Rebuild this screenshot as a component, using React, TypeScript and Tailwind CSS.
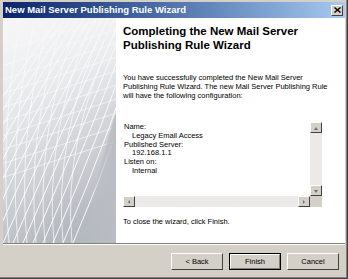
import React from 'react'

const font = { fontFamily: '"Liberation Sans", Arial, sans-serif' }

const ArrowBtn = ({ dir }: { dir: 'up' | 'down' | 'left' | 'right' }) => {
    const pts = {
        up: '2,6 6,6 4,3',
        down: '2,3 6,3 4,6',
        left: '5,2 5,6 3,4',
        right: '3,2 3,6 5,4',
    }[dir]
    return (
        <div className="w-[12px] h-[11px] shrink-0 bg-[#d4d0c8] border-t border-l border-t-white border-l-white border-b border-r border-b-[#404040] border-r-[#404040] flex items-center justify-center">
            <svg width="8" height="8" viewBox="0 0 8 8"><polygon points={pts} fill="#707070" /></svg>
        </div>
    )
}

const SideArt = () => {
    const a: React.ReactElement[] = []
    for (let i = 0; i < 16; i++) {
        const x0 = -80 + i * 10
        a.push(<path key={'a' + i} d={`M${x0} 225 Q ${x0 + 50} 110 ${60 + i * 6} -5`} stroke="white" strokeWidth="1" fill="none" opacity="0.9" />)
    }
    for (let i = 0; i < 12; i++) {
        const x0 = -30 + i * 9
        a.push(<path key={'b' + i} d={`M${x0} 225 Q ${x0 - 10} 120 ${-40 + i * 14} 10`} stroke="white" strokeWidth="1" fill="none" opacity="0.7" />)
    }
    for (let i = 0; i < 10; i++) {
        const y = 5 + i * 14
        a.push(<path key={'c' + i} d={`M-5 ${y + 30} L 120 ${y - 10}`} stroke="white" strokeWidth="1" fill="none" opacity="0.6" />)
    }
    return (
        <svg width="113" height="225" viewBox="0 0 113 225" className="block">
            <defs>
                <linearGradient id="bg" x1="0" y1="0" x2="0.4" y2="1">
                    <stop offset="0" stopColor="#f6f6f7" />
                    <stop offset="0.45" stopColor="#dfe1e4" />
                    <stop offset="1" stopColor="#b4b8bf" />
                </linearGradient>
                <linearGradient id="fade" x1="0" y1="0" x2="0" y2="1">
                    <stop offset="0" stopColor="#f6f6f7" stopOpacity="0.75" />
                    <stop offset="0.4" stopColor="#f6f6f7" stopOpacity="0.2" />
                    <stop offset="1" stopColor="#f6f6f7" stopOpacity="0" />
                </linearGradient>
                <linearGradient id="corner" x1="0" y1="0" x2="1" y2="0">
                    <stop offset="0" stopColor="#b9bdc3" stopOpacity="0" />
                    <stop offset="1" stopColor="#b9bdc3" stopOpacity="1" />
                </linearGradient>
            </defs>
            <rect width="113" height="225" fill="url(#bg)" />
            {a}
            <rect width="113" height="225" fill="url(#fade)" />
            <path d="M80 225 Q 95 150 113 95 L113 225 Z" fill="url(#corner)" />
        </svg>
    )
}

const App = () => {
    return (
        <div className="w-[348px] h-[279px] bg-[#d4d0c8] text-black overflow-hidden" style={font}>
            <div className="w-full h-full border-r border-b border-[#404040]">
                <div className="w-full h-full border-r border-b border-[#808080] pt-[2px] pl-[3px] pr-[1px] flex flex-col">

                    <div className="h-[16px] shrink-0 flex items-center justify-between pl-[2px] pr-[2px] bg-gradient-to-r from-[#0a246a] to-[#a6caf0]">
                        <span className="text-white font-bold text-[9.5px] leading-none">New Mail Server Publishing Rule Wizard</span>
                        <div className="w-[12px] h-[11px] bg-[#d4d0c8] border-t border-l border-t-white border-l-white border-b border-r border-b-[#404040] border-r-[#404040] flex items-center justify-center">
                            <svg width="7" height="6" viewBox="0 0 7 6"><path d="M0.5 0.5 L6.5 5.5 M6.5 0.5 L0.5 5.5" stroke="black" strokeWidth="1.4" /></svg>
                        </div>
                    </div>

                    <div className="h-[225px] shrink-0 flex">
                        <div className="w-[113px] shrink-0">
                            <SideArt />
                        </div>
                        <div className="flex-1 bg-white pl-[7px] pt-[6px]">
                            <h1 className="text-[11.5px] font-bold leading-[14px]">Completing the New Mail Server<br />Publishing Rule Wizard</h1>

                            <p className="mt-[21px] text-[7.5px] leading-[9px] whitespace-nowrap">
                                You have successfully completed the New Mail Server<br />
                                Publishing Rule Wizard. The new Mail Server Publishing Rule<br />
                                will have the following configuration:
                            </p>

                            <div className="mt-[22px] w-[199px] h-[85px] flex flex-col">
                                <div className="flex h-[74px]">
                                    <div className="flex-1 pl-[1px] pt-[1px] text-[7.5px] leading-[8.8px]">
                                        <div>Name:</div>
                                        <div className="pl-[8px]">Legacy Email Access</div>
                                        <div>Published Server:</div>
                                        <div className="pl-[8px]">192.168.1.1</div>
                                        <div>Listen on:</div>
                                        <div className="pl-[8px]">Internal</div>
                                    </div>
                                    <div className="w-[12px] flex flex-col justify-between bg-[#ebeae8]">
                                        <ArrowBtn dir="up" />
                                        <ArrowBtn dir="down" />
                                    </div>
                                </div>
                                <div className="flex h-[11px]">
                                    <div className="flex-1 flex justify-between bg-[#ebeae8]">
                                        <ArrowBtn dir="left" />
                                        <ArrowBtn dir="right" />
                                    </div>
                                    <div className="w-[12px] bg-[#d4d0c8]" />
                                </div>
                            </div>

                            <p className="mt-[10px] text-[7.5px] leading-[9px]">To close the wizard, click Finish.</p>
                        </div>
                    </div>

                    <div className="flex-1 border-t border-[#808080]">
                        <div className="h-full border-t border-white flex justify-end items-start pt-[8px] gap-[6px] pr-[6px]">
                            <button className="w-[52px] h-[17px] bg-[#d4d0c8] border-t border-l border-t-white border-l-white border-b border-r border-b-[#404040] border-r-[#404040] text-[7.5px] leading-none">&lt; Back</button>
                            <button className="w-[52px] h-[17px] bg-[#d4d0c8] border border-black p-0">
                                <div className="w-full h-full border-t border-l border-t-white border-l-white border-b border-r border-b-[#808080] border-r-[#808080] flex items-center justify-center text-[7.5px] leading-none">Finish</div>
                            </button>
                            <button className="w-[52px] h-[17px] bg-[#d4d0c8] border-t border-l border-t-white border-l-white border-b border-r border-b-[#404040] border-r-[#404040] text-[7.5px] leading-none">Cancel</button>
                        </div>
                    </div>

                </div>
            </div>
        </div>
    )
}

export default App
